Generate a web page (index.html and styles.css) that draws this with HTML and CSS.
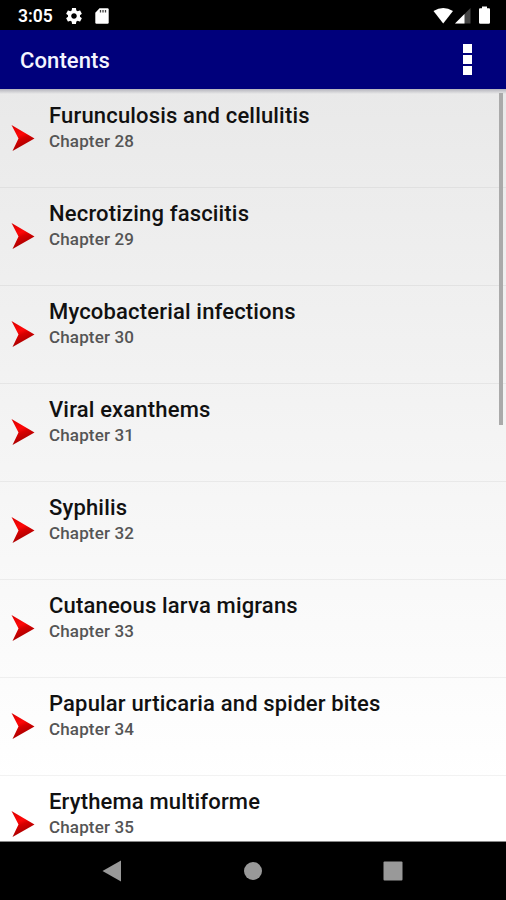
FILE: index.html
```html
<!DOCTYPE html>
<html lang="en">

<head>
    <meta charset="UTF-8">
    <meta name="viewport" content="width=device-width, initial-scale=1.0">
    <title>Contents</title>
    <link rel="stylesheet" href="styles.css">
</head>

<body>
    <svg class="defs" width="0" height="0">
        <defs>
            <linearGradient id="red" x1="0" y1="0" x2="0.35" y2="1">
                <stop offset="0" stop-color="#d80000" />
                <stop offset="0.45" stop-color="#ff0808" />
                <stop offset="0.6" stop-color="#d80000" />
                <stop offset="1" stop-color="#a00000" />
            </linearGradient>
            <symbol id="arrow" viewBox="0 0 24 28">
                <path d="M0.5 1 L23.5 14.5 L1.5 27 L7.5 14.5 Z" fill="url(#red)" />
            </symbol>
        </defs>
    </svg>

    <div id="container">
        <div id="statusBar">
            <span class="time">3:05</span>
            <svg class="gear" width="16" height="16" viewBox="2 2 20 20">
                <path fill="#fff" d="M19.43 12.98c.04-.32.07-.64.07-.98s-.03-.66-.07-.98l2.11-1.65c.19-.15.24-.42.12-.64l-2-3.46c-.12-.22-.39-.3-.61-.22l-2.49 1c-.52-.4-1.08-.73-1.69-.98l-.38-2.65C14.46 2.18 14.25 2 14 2h-4c-.25 0-.46.18-.49.42l-.38 2.65c-.61.25-1.17.59-1.69.98l-2.49-1c-.23-.09-.49 0-.61.22l-2 3.46c-.13.22-.07.49.12.64l2.11 1.65c-.04.32-.07.65-.07.98s.03.66.07.98l-2.11 1.65c-.19.15-.24.42-.12.64l2 3.46c.12.22.39.3.61.22l2.49-1c.52.4 1.08.73 1.69.98l.38 2.65c.03.24.24.42.49.42h4c.25 0 .46-.18.49-.42l.38-2.65c.61-.25 1.17-.59 1.69-.98l2.49 1c.23.09.49 0 .61-.22l2-3.46c.12-.22.07-.49-.12-.64l-2.11-1.65zM12 15.5c-1.93 0-3.5-1.57-3.5-3.5s1.57-3.5 3.5-3.5 3.5 1.57 3.5 3.5-1.57 3.5-3.5 3.5z" />
            </svg>
            <svg class="card" width="14" height="16" viewBox="0 0 14 16">
                <path d="M4.5 0.3 H12.5 Q13.7 0.3 13.7 1.5 V14.5 Q13.7 15.7 12.5 15.7 H1.5 Q0.3 15.7 0.3 14.5 V4.7 Z" fill="#fff" />
                <path d="M5.5 2 V4.5 M8 2 V4.5 M10.5 2 V4.5" stroke="#000" stroke-width="1.3" opacity="0.75" />
            </svg>
            <svg class="signals" width="58" height="18" viewBox="0 0 58 18">
                <path d="M0.5 4 Q10.2 -1.8 20 4 L10.2 16.5 Z" fill="#fff" />
                <path d="M37.5 1 V16.5 H22 Z" fill="#454545" />
                <path d="M31.5 7 V16.5 H22 Z" fill="#fff" />
                <path d="M49 -0.5 H54 V1.3 H56 Q57 1.3 57 2.5 V15.5 Q57 16.8 55.7 16.8 H47.3 Q46 16.8 46 15.5 V2.5 Q46 1.3 47 1.3 H49 Z" fill="#fff" />
            </svg>
        </div>

        <div id="header">
            <h1>Contents</h1>
            <div class="menu"><i></i><i></i><i></i></div>
        </div>

        <div id="listArea">
            <div class="item">
                <svg class="arrow"><use href="#arrow" /></svg>
                <div>
                    <div class="title">Furunculosis and cellulitis</div>
                    <div class="chapter">Chapter 28</div>
                </div>
            </div>
            <div class="item">
                <svg class="arrow"><use href="#arrow" /></svg>
                <div>
                    <div class="title">Necrotizing fasciitis</div>
                    <div class="chapter">Chapter 29</div>
                </div>
            </div>
            <div class="item">
                <svg class="arrow"><use href="#arrow" /></svg>
                <div>
                    <div class="title">Mycobacterial infections</div>
                    <div class="chapter">Chapter 30</div>
                </div>
            </div>
            <div class="item">
                <svg class="arrow"><use href="#arrow" /></svg>
                <div>
                    <div class="title">Viral exanthems</div>
                    <div class="chapter">Chapter 31</div>
                </div>
            </div>
            <div class="item">
                <svg class="arrow"><use href="#arrow" /></svg>
                <div>
                    <div class="title">Syphilis</div>
                    <div class="chapter">Chapter 32</div>
                </div>
            </div>
            <div class="item">
                <svg class="arrow"><use href="#arrow" /></svg>
                <div>
                    <div class="title">Cutaneous larva migrans</div>
                    <div class="chapter">Chapter 33</div>
                </div>
            </div>
            <div class="item">
                <svg class="arrow"><use href="#arrow" /></svg>
                <div>
                    <div class="title">Papular urticaria and spider bites</div>
                    <div class="chapter">Chapter 34</div>
                </div>
            </div>
            <div class="item">
                <svg class="arrow"><use href="#arrow" /></svg>
                <div>
                    <div class="title">Erythema multiforme</div>
                    <div class="chapter">Chapter 35</div>
                </div>
            </div>
            <div class="scrollbar"></div>
        </div>

        <div id="navBar">
            <svg width="20" height="22" viewBox="0 0 20 22">
                <path d="M0.5 11 L19 0.5 V21.5 Z" fill="#999" />
            </svg>
            <svg width="18" height="18" viewBox="0 0 18 18">
                <circle cx="9" cy="9" r="9" fill="#999" />
            </svg>
            <svg width="20" height="20" viewBox="0 0 20 20">
                <rect x="0.5" y="0.5" width="19" height="19" rx="1" fill="#999" />
            </svg>
        </div>
    </div>
</body>

</html>
```

FILE: styles.css
```css
body {
    font-family: Roboto, "Liberation Sans", sans-serif;
    margin: 0;
    padding: 0;
}

.defs {
    position: absolute;
}

#container {
    display: flex;
    flex-direction: column;
    height: 900px;
    overflow: hidden;
}

#statusBar {
    display: flex;
    align-items: center;
    box-sizing: border-box;
    flex: none;
    height: 30px;
    padding: 1px 15px 0 18px;
    background-color: #000;
    color: #fff;
}

.time {
    width: 48px;
    font-size: 17.5px;
    font-weight: 600;
}

.card {
    margin-left: 13px;
}

.signals {
    margin-left: auto;
    overflow: visible;
}

#header {
    display: flex;
    align-items: center;
    justify-content: space-between;
    flex: none;
    height: 59px;
    padding: 0 34px 0 20px;
    background-color: #00007b;
    color: #f4f4ff;
}

h1 {
    margin: 2px 0 0;
    font-size: 22px;
    font-weight: 500;
    letter-spacing: 0.1px;
}

.menu {
    display: flex;
    flex-direction: column;
    gap: 2px;
}

.menu i {
    width: 9px;
    height: 9px;
    background-color: #fff;
}

#listArea {
    position: relative;
    flex: 1;
    overflow: hidden;
    border-bottom: 1px solid #888;
    background: linear-gradient(#b4b4bc, rgba(220, 220, 220, 0)) top / 100% 5px no-repeat, linear-gradient(#e9e9e9, #fff 92%);
}

.item {
    display: flex;
    box-sizing: border-box;
    height: 98px;
    padding: 13px 0 0 11px;
    border-top: 1px solid rgba(0, 0, 0, 0.05);
}

.item:first-child {
    padding-top: 14px;
    border-top: none;
}

.arrow {
    width: 24px;
    height: 28px;
    margin: 21px 14px 0 0;
}

.title {
    font-size: 22px;
    line-height: 26px;
    font-weight: 500;
    letter-spacing: 0.17px;
    color: #111;
}

.chapter {
    font-size: 17px;
    line-height: 24px;
    font-weight: 500;
    letter-spacing: 0.15px;
    color: #555;
}

.scrollbar {
    position: absolute;
    top: 4px;
    right: 3px;
    width: 4px;
    height: 332px;
    background-color: #aaa;
}

#navBar {
    display: flex;
    align-items: center;
    justify-content: space-between;
    flex: none;
    height: 58px;
    padding: 0 103px 0 102px;
    background-color: #000;
}
```
